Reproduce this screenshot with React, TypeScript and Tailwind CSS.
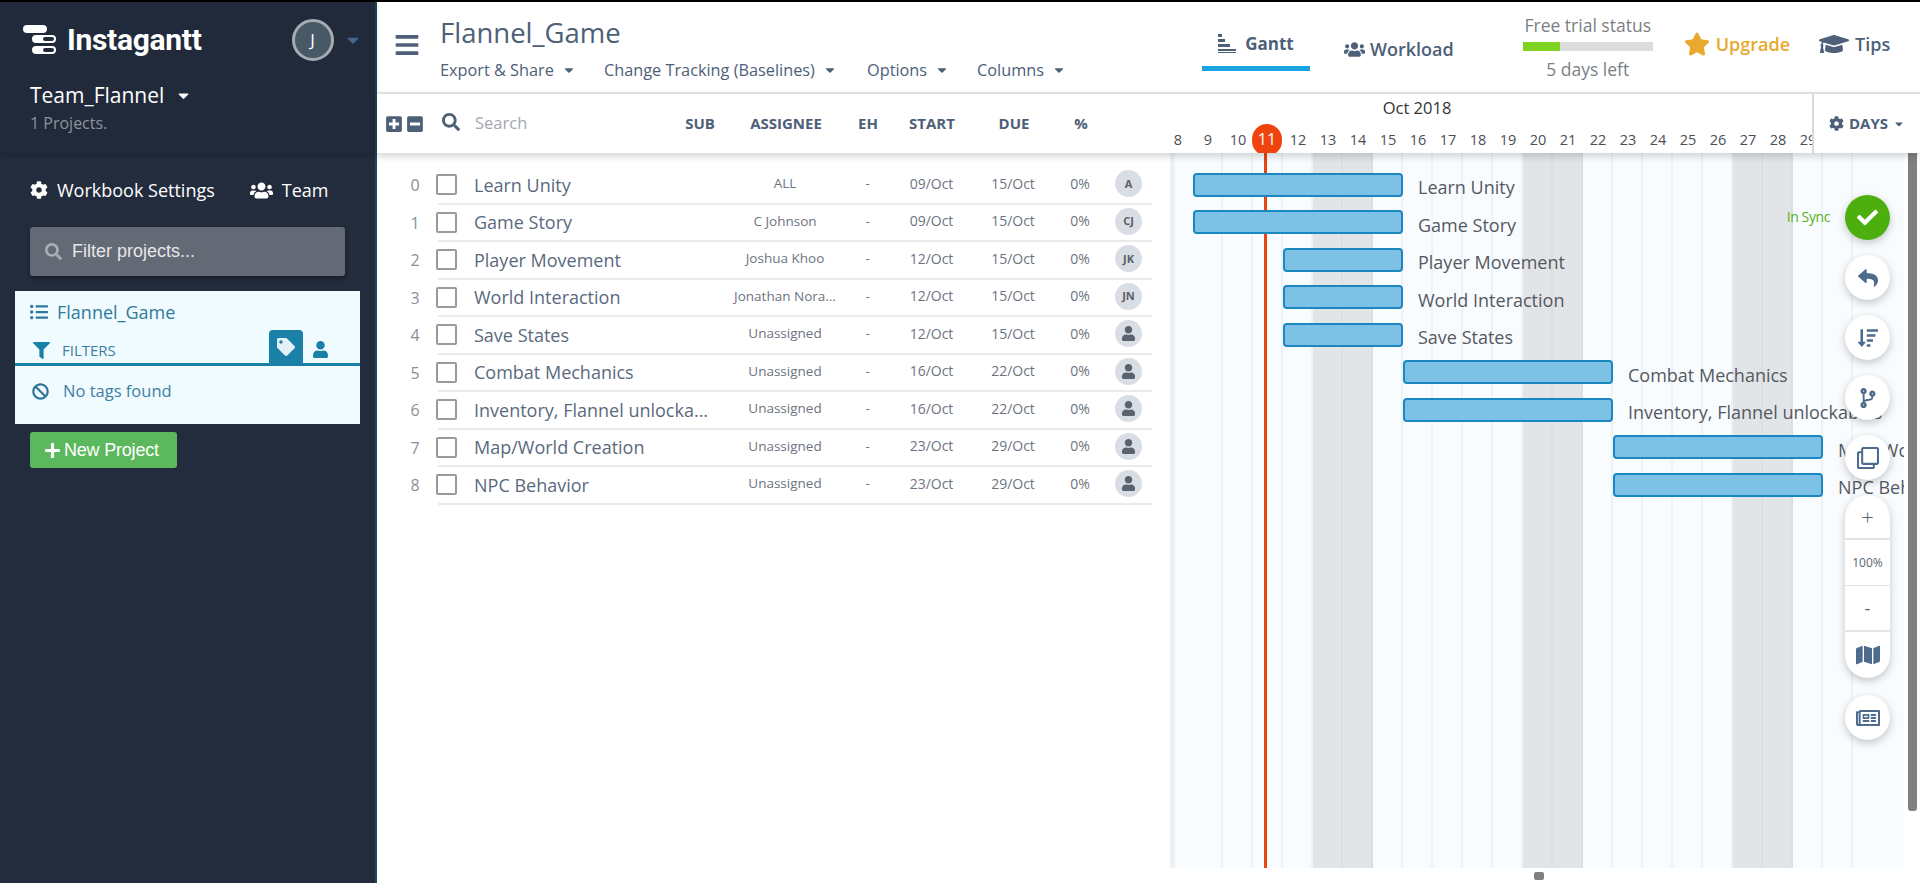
import {
  FaBan, FaBars, FaCaretDown, FaCheck, FaCodeBranch, FaCog, FaFilter, FaGraduationCap, FaListUl, FaMap,
  FaMinusSquare, FaPlus, FaPlusSquare, FaRegClone, FaRegNewspaper, FaReply, FaSearch, FaSortAmountDown,
  FaStar, FaTag, FaUser, FaUsers,
} from 'react-icons/fa';

const tasks = [
  { name: 'Learn Unity', who: 'ALL', start: '09/Oct', due: '15/Oct', badge: 'A', from: 9, days: 7 },
  { name: 'Game Story', who: 'C Johnson', start: '09/Oct', due: '15/Oct', badge: 'CJ', from: 9, days: 7 },
  { name: 'Player Movement', who: 'Joshua Khoo', start: '12/Oct', due: '15/Oct', badge: 'JK', from: 12, days: 4 },
  { name: 'World Interaction', who: 'Jonathan Nora...', start: '12/Oct', due: '15/Oct', badge: 'JN', from: 12, days: 4 },
  { name: 'Save States', who: 'Unassigned', start: '12/Oct', due: '15/Oct', badge: '', from: 12, days: 4 },
  { name: 'Combat Mechanics', who: 'Unassigned', start: '16/Oct', due: '22/Oct', badge: '', from: 16, days: 7 },
  { name: 'Inventory, Flannel unlockables', who: 'Unassigned', start: '16/Oct', due: '22/Oct', badge: '', from: 16, days: 7 },
  { name: 'Map/World Creation', who: 'Unassigned', start: '23/Oct', due: '29/Oct', badge: '', from: 23, days: 7 },
  { name: 'NPC Behavior', who: 'Unassigned', start: '23/Oct', due: '29/Oct', badge: '', from: 23, days: 7 },
];

const days = Array.from({ length: 23 }, (_, i) => i + 8);
const weekend = [13, 14, 20, 21, 27, 28];

function Logo() {
  return (
    <svg width="34" height="32" viewBox="0 0 34 32" className="shrink-0">
      <rect x="0" y="1" width="24" height="8" rx="4" fill="#fff" />
      <rect x="9" y="11" width="24" height="8" rx="4" fill="#fff" />
      <rect x="20" y="13" width="11" height="4" rx="2" fill="#222b3b" />
      <rect x="9" y="22" width="24" height="8" rx="4" fill="#fff" />
      <rect x="20" y="24" width="11" height="4" rx="2" fill="#222b3b" />
    </svg>
  );
}

function GanttIcon() {
  return (
    <svg width="19" height="20" viewBox="0 0 19 20" className="shrink-0" fill="#4d6078">
      <rect x="0" y="0" width="4" height="3" />
      <rect x="0" y="5" width="7" height="3" />
      <rect x="0" y="10" width="12" height="3" />
      <rect x="0" y="15" width="18" height="2" />
      <rect x="0" y="18" width="18" height="1" />
    </svg>
  );
}

function MenuItem({ label, className }: { label: string; className: string }) {
  return (
    <div className={`flex items-center gap-[8px] ${className}`}>
      <span>{label}</span>
      <FaCaretDown className="text-[14px]" />
    </div>
  );
}

function Sidebar() {
  return (
    <aside className="w-[377px] shrink-0 bg-[#232c3c] border-r-2 border-[#1b4a58] flex flex-col text-white">
      <div className="h-[151px] shrink-0 bg-[#212a3a] shadow-[0_2px_6px_rgba(0,0,0,0.25)] pl-[23px] pt-[17px]">
        <div className="flex items-center h-[42px]">
          <Logo />
          <span className="ml-[10px] font-['Roboto'] font-bold text-[30px] leading-none tracking-[-0.3px]">Instagantt</span>
          <div className="ml-[90px] w-[42px] h-[42px] shrink-0 rounded-full bg-[#475866] border-[3px] border-[#a5abb1] flex items-center justify-center text-[17px]">J</div>
          <FaCaretDown className="ml-[10px] text-[#47648a] text-[18px]" />
        </div>
        <div className="mt-[20px] ml-[7px] flex items-center gap-[11px] text-[21px] leading-[28px]">
          <span>Team_Flannel</span>
          <FaCaretDown className="text-[17px]" />
        </div>
        <div className="mt-[4px] ml-[7px] text-[16px] leading-[20px] text-[#8d939c]">1 Projects.</div>
      </div>
      <div className="mt-[24px] ml-[30px] flex items-center h-[26px] text-[18px]">
        <FaCog className="text-[18px]" />
        <span className="ml-[9px]">Workbook Settings</span>
        <FaUsers className="ml-[35px] text-[23px]" />
        <span className="ml-[9px]">Team</span>
      </div>
      <div className="mt-[24px] mx-[30px] h-[49px] rounded-[3px] bg-[#636975] shadow-[0_2px_4px_rgba(0,0,0,0.4)] flex items-center pl-[15px] font-['Liberation_Sans'] text-[18px] text-[#e6e7e9]">
        <FaSearch className="text-[17px] text-[#a9adb3]" />
        <span className="ml-[10px]">Filter projects...</span>
      </div>
      <div className="mt-[15px] mx-[15px] h-[133px] bg-[#f0fbff] flex flex-col text-[#2f7a9c]">
        <div className="flex items-center h-[42px] pl-[15px] text-[18px]">
          <FaListUl className="text-[18px]" />
          <span className="ml-[9px]">Flannel_Game</span>
        </div>
        <div className="flex items-end h-[33px] border-b-[3px] border-[#1a80a8] pl-[18px] relative">
          <FaFilter className="text-[17px] text-[#1a80a8] mb-[4px]" />
          <span className="ml-[12px] mb-[1px] w-[54px] text-[15px] leading-[24px] text-[#3f7ea3]">FILTERS</span>
          <div className="ml-[153px] w-[34px] h-[33px] rounded-t-[4px] bg-[#1a80a8] flex items-center justify-center text-[#e4f1f7] text-[18px]">
            <FaTag />
          </div>
          <FaUser className="ml-[9px] mb-[5px] text-[17px] text-[#1a80a8]" />
        </div>
        <div className="flex items-center h-[50px] pl-[17px] text-[16.5px] text-[#3f7ea3]">
          <FaBan className="text-[17px] text-[#2f7399]" />
          <span className="ml-[14px]">No tags found</span>
        </div>
      </div>
      <div className="mt-[8px] ml-[30px] w-[147px] h-[36px] rounded-[3px] bg-[#5cb85c] flex items-center pl-[14px] font-['Liberation_Sans'] text-[18px] tracking-[-0.2px]">
        <FaPlus className="text-[17px]" />
        <span className="ml-[3px]">New Project</span>
      </div>
    </aside>
  );
}

function Header() {
  return (
    <header className="h-[92px] shrink-0 border-b-2 border-[#e6e6e6] flex text-[#4d6078]">
      <FaBars className="ml-[17px] mt-[30px] text-[26px] text-[#4d6078] shrink-0" />
      <div className="ml-[20px] w-[720px] shrink-0">
        <div className="mt-[13px] text-[27.5px] leading-[36px]">Flannel_Game</div>
        <div className="mt-[7px] flex text-[16.3px] leading-[24px]">
          <MenuItem label="Export & Share" className="w-[164px]" />
          <MenuItem label="Change Tracking (Baselines)" className="w-[263px]" />
          <MenuItem label="Options" className="w-[110px]" />
          <MenuItem label="Columns" className="w-[100px] -mt-[1px]" />
        </div>
      </div>
      <div className="ml-[42px] w-[108px] h-[69px] border-b-[5px] border-[#1ca3e2] flex items-center justify-center gap-[8px] pt-[20px] font-bold text-[17px]">
        <GanttIcon />
        <span>Gantt</span>
      </div>
      <div className="ml-[34px] h-[69px] flex items-center pt-[25px] gap-[5px] font-semibold text-[18px]">
        <FaUsers className="text-[21px]" />
        <span>Workload</span>
      </div>
      <div className="ml-[69px] w-[130px] shrink-0 text-[#7b7f85] text-[17.5px] text-center whitespace-nowrap">
        <div className="mt-[11px] leading-[24px]">Free trial status</div>
        <div className="mt-[5px] h-[9px] bg-[#dcdcdc]">
          <div className="h-full w-[37px] bg-[#7ed321]" />
        </div>
        <div className="mt-[6px] leading-[24px]">5 days left</div>
      </div>
      <div className="ml-[31px] mt-[28px] flex items-center h-[28px] text-[#e8a92e] font-semibold text-[18px] gap-[6px]">
        <FaStar className="text-[26px]" />
        <span>Upgrade</span>
      </div>
      <div className="ml-[29px] mt-[28px] flex items-center h-[28px] font-semibold text-[18px] gap-[6px]">
        <FaGraduationCap className="text-[30px]" />
        <span>Tips</span>
      </div>
    </header>
  );
}

function Toolbar() {
  return (
    <div className="h-[59px] shrink-0 bg-white flex relative z-20 shadow-[0_3px_8px_rgba(0,0,0,0.18)] text-[#4d6078]">
      <div className="w-[786px] shrink-0 flex items-center">
        <FaPlusSquare className="ml-[8px] text-[18px]" />
        <FaMinusSquare className="ml-[3px] text-[18px]" />
        <FaSearch className="ml-[18px] -mt-[4px] text-[18px]" />
        <span className="ml-[15px] w-[73px] text-[16.5px] text-[#a3a7ad]">Search</span>
        <div className="ml-[132px] flex font-bold text-[15px] text-center">
          <span className="w-[40px]">SUB</span>
          <span className="w-[132px]">ASSIGNEE</span>
          <span className="w-[32px]">EH</span>
          <span className="w-[96px]">START</span>
          <span className="w-[68px]">DUE</span>
          <span className="w-[66px]">%</span>
        </div>
      </div>
      <div className="w-[649px] shrink-0 overflow-hidden text-[#4b4f55]">
        <div className="w-[508px] text-center text-[16.5px] leading-[20px] mt-[4px] text-[#333]">Oct 2018</div>
        <div className="flex mt-[10px] text-[14.5px] leading-[24px]">
          {days.map((d) => (
            <div key={d} className="w-[30px] shrink-0 flex justify-center">
              {d === 11 ? (
                <div className="w-[30px] h-[32px] -mt-[4px] -ml-[2px] rounded-full bg-[#f0440f] text-white text-[16px] flex justify-center pt-[3px]">11</div>
              ) : (
                d
              )}
            </div>
          ))}
        </div>
      </div>
      <div className="flex-1 border-l-2 border-[#d8d8d8] flex items-center justify-center gap-[5px] font-bold text-[15px]">
        <FaCog className="text-[15px]" />
        <span>DAYS</span>
        <FaCaretDown className="text-[12px]" />
      </div>
    </div>
  );
}

function TaskList() {
  return (
    <div className="w-[793px] shrink-0 pt-[14px]">
      {tasks.map((t, i) => (
        <div key={t.name} className="flex h-[37.5px]">
          <div className="ml-[28px] w-[20px] shrink-0 text-center text-[16px] leading-[36px] text-[#8a8f96]">{i}</div>
          <div className="ml-[13px] w-[714px] shrink-0 flex items-center border-b-2 border-[#eaeaea] text-[#6d7480]">
            <div className="-ml-[2px] w-[21px] h-[21px] shrink-0 rounded-[2px] border-2 border-[#9a9a9a] bg-white" />
            <div className="ml-[17px] mt-[1px] w-[238px] shrink-0 truncate text-[18px] text-[#5a6a7e]">{t.name}</div>
            <div className="ml-[18px] w-[110px] shrink-0 truncate text-center text-[13.5px] -mt-[3px]">{t.who}</div>
            <div className="w-[55px] shrink-0 text-center text-[13px] -mt-[2px]">-</div>
            <div className="w-[73px] shrink-0 text-center text-[14px] -mt-[3px]">{t.start}</div>
            <div className="w-[90px] shrink-0 text-center text-[14px] -mt-[3px]">{t.due}</div>
            <div className="w-[44px] shrink-0 text-center text-[14px] -mt-[3px]">0%</div>
            <div className="ml-[13px] w-[27px] h-[27px] shrink-0 rounded-full bg-[#d9dee4] flex items-center justify-center text-[11px] font-bold text-[#5a5f66] -mt-[2px]">
              {t.badge || <FaUser className="text-[15px] text-[#59626f]" />}
            </div>
          </div>
        </div>
      ))}
    </div>
  );
}

const roundBtn = 'w-[45px] h-[45px] rounded-full bg-white shadow-[0_3px_8px_rgba(0,0,0,0.22)] flex items-center justify-center text-[#4d6b8c] text-[20px]';

function FloatingTools() {
  return (
    <div className="absolute z-10 top-[42px] right-[14px] w-[45px] flex flex-col items-center">
      <div className="absolute right-[60px] top-[12px] text-[14px] leading-[20px] text-[#5ab01a] tracking-[-0.4px] whitespace-nowrap">In Sync</div>
      <div className="w-[45px] h-[45px] rounded-full bg-[#4caf0e] shadow-[0_3px_8px_rgba(0,0,0,0.22)] flex items-center justify-center text-white text-[21px]">
        <FaCheck />
      </div>
      <div className={`mt-[15px] ${roundBtn}`}><FaReply /></div>
      <div className={`mt-[15px] ${roundBtn}`}><FaSortAmountDown /></div>
      <div className={`mt-[15px] ${roundBtn}`}><FaCodeBranch /></div>
      <div className={`mt-[15px] ${roundBtn}`}><FaRegClone className="text-[22px]" /></div>
      <div className="mt-[15px] w-[45px] h-[183px] rounded-full bg-white shadow-[0_3px_8px_rgba(0,0,0,0.22)] flex flex-col text-[#5b6673]">
        <div className="h-[45px] flex items-center justify-center text-[22px] border-b-2 border-[#e2e4e6] font-light">+</div>
        <div className="h-[46px] flex items-center justify-center text-[12px] border-b border-[#e2e4e6]">100%</div>
        <div className="h-[46px] flex items-center justify-center text-[18px] border-b-2 border-[#e2e4e6]">-</div>
        <div className="flex-1 flex items-center justify-center text-[24px] text-[#4d6b8c]"><FaMap /></div>
      </div>
      <div className={`mt-[17px] ${roundBtn} text-[24px]`}><FaRegNewspaper /></div>
    </div>
  );
}

function Chart() {
  return (
    <div className="relative w-[734px] h-[715px] shrink-0 overflow-hidden bg-[#f8fcff]">
      <div className="absolute inset-0 flex">
        <div className="w-[23px] shrink-0 border-l-[5px] border-[#eef0f2]" />
        {days.slice(1).map((d) => (
          <div
            key={d}
            className={`w-[30px] shrink-0 border-r-2 ${weekend.includes(d) ? 'bg-[#e2e5e8] border-[#dcdfe2]' : 'border-[#eff2f5]'}`}
          />
        ))}
        <div className="absolute left-[94px] top-0 bottom-0 w-[3px] bg-[#e8450f]" />
      </div>
      <div className="relative pt-[13px]">
        {tasks.map((t) => (
          <div key={t.name} className="flex items-center h-[37.5px]">
            <div
              className="h-[24px] shrink-0 rounded-[4px] bg-[#7dc1e6] border-2 border-[#1a87c0]"
              style={{ marginLeft: 23 + (t.from - 9) * 30, width: t.days * 30 }}
            />
            <span className="ml-[15px] mt-[6px] text-[18px] whitespace-nowrap text-[#55595f]">{t.name}</span>
          </div>
        ))}
      </div>
      <FloatingTools />
    </div>
  );
}

export default function App() {
  return (
    <div className="w-[1920px] h-[883px] overflow-hidden bg-white border-t-2 border-black flex font-['Open_Sans',sans-serif]">
      <Sidebar />
      <main className="flex-1 min-w-0 flex flex-col">
        <Header />
        <Toolbar />
        <div className="flex flex-1 min-h-0">
          <TaskList />
          <Chart />
          <div className="ml-[4px] w-[9px] h-[658px] rounded-b-[3px] bg-[#808080]" />
        </div>
      </main>
      <div className="absolute left-[1534px] top-[872px] w-[10px] h-[8px] rounded-[2px] bg-[#808080]" />
    </div>
  );
}
